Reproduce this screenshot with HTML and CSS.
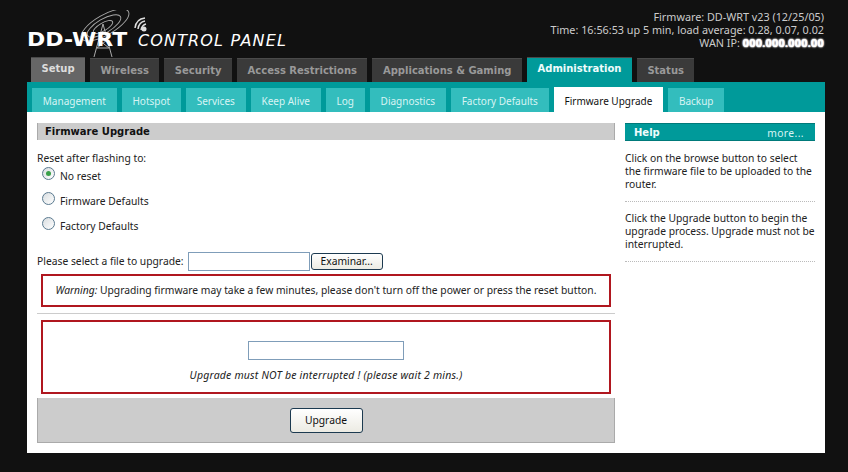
FILE: index.html
```html
<!DOCTYPE html>
<html lang="en">
<head>
  <meta charset="UTF-8" />
  <title>DD-WRT Control Panel</title>
  <link rel="stylesheet" href="styles.css">
</head>
<body>
  <div class="page">
    <!-- Header -->
    <div class="header">
      <div class="logo">
        <svg class="logo-art" width="110" height="50" viewBox="0 0 110 50" fill="none" stroke="#aaa">
          <ellipse cx="53" cy="15" rx="27" ry="10" transform="rotate(-30 53 15)" stroke-width="0.9"/>
          <ellipse cx="52" cy="16" rx="19" ry="7" transform="rotate(-30 52 16)" stroke-width="0.9"/>
          <ellipse cx="51" cy="17" rx="11" ry="4" transform="rotate(-30 51 17)" stroke-width="0.9"/>
          <path d="M51 14 L42 47 M51 14 L60 47 M47 30 H55 M45 38 H57 M47 30 L57 38 M55 30 L45 38" stroke-width="1"/>
          <path d="M83 18 Q84 9 93 8 M86 19 Q87 12 93 11 M89 20 Q90 15 94 14" stroke="#ddd" stroke-width="1.5"/>
          <circle cx="92" cy="19" r="2.5" fill="#ddd" stroke="none"/>
        </svg>
        <span class="logo-name">DD-WRT</span>
        <span class="logo-title">CONTROL PANEL</span>
      </div>
      <div class="info">
        <div>Firmware: DD-WRT v23 (12/25/05)</div>
        <div>Time: 16:56:53 up 5 min, load average: 0.28, 0.07, 0.02</div>
        <div>WAN IP: <span class="blur-ip">000.000.000.00</span></div>
      </div>
    </div>

    <!-- Main tabs -->
    <div class="tabs">
      <a class="tab tab-setup">Setup</a>
      <a class="tab">Wireless</a>
      <a class="tab">Security</a>
      <a class="tab">Access Restrictions</a>
      <a class="tab">Applications &amp; Gaming</a>
      <a class="tab tab-active">Administration</a>
      <a class="tab">Status</a>
    </div>

    <!-- Sub tabs -->
    <div class="subtabs">
      <a class="subtab">Management</a>
      <a class="subtab">Hotspot</a>
      <a class="subtab">Services</a>
      <a class="subtab">Keep Alive</a>
      <a class="subtab">Log</a>
      <a class="subtab">Diagnostics</a>
      <a class="subtab">Factory Defaults</a>
      <a class="subtab subtab-active">Firmware Upgrade</a>
      <a class="subtab">Backup</a>
    </div>

    <!-- Content -->
    <div class="content">
      <div class="main">
        <h2 class="section-title">Firmware Upgrade</h2>
        <div class="reset-label">Reset after flashing to:</div>
        <label class="radio-row"><span class="radio radio-on"></span>No reset</label>
        <label class="radio-row"><span class="radio"></span>Firmware Defaults</label>
        <label class="radio-row"><span class="radio"></span>Factory Defaults</label>
        <div class="file-row">
          <span>Please select a file to upgrade:</span>
          <span class="file-input"></span>
          <button class="btn btn-browse">Examinar...</button>
        </div>
        <div class="warning"><em>Warning:</em> Upgrading firmware may take a few minutes, please don't turn off the power or press the reset button.</div>
        <hr class="rule">
        <div class="progress-box">
          <div class="progress-bar"></div>
          <em class="progress-note">Upgrade must NOT be interrupted ! (please wait 2 mins.)</em>
        </div>
        <div class="submit-bar">
          <button class="btn btn-upgrade">Upgrade</button>
        </div>
      </div>

      <div class="help">
        <div class="help-head"><b>Help</b><span>more...</span></div>
        <p class="help-text">Click on the browse button to select the firmware file to be uploaded to the router.</p>
        <p class="help-text">Click the Upgrade button to begin the upgrade process. Upgrade must not be interrupted.</p>
      </div>
    </div>
  </div>
</body>
</html>
```

FILE: styles.css
```css
html, body {
  margin: 0;
  height: 100%;
  background: #111;
  overflow: hidden;
}

body {
  font-family: "Noto Sans", "Liberation Sans", sans-serif;
  font-size: 10.3px;
  color: #222;
}

.page {
  width: 798px;
  margin-left: 27px;
}

/* Header */
.header {
  display: flex;
  justify-content: space-between;
  height: 57px;
}

.logo {
  position: relative;
  padding-top: 27px;
  display: flex;
  align-items: baseline;
  color: #fff;
  white-space: nowrap;
  height: 30px;
}

.logo-art {
  position: absolute;
  left: 25px;
  top: 10px;
}

.logo-name {
  position: relative;
  font-family: "DejaVu Sans", sans-serif;
  font-weight: bold;
  font-size: 20px;
  width: 111px;
  transform: scaleX(1.1);
  transform-origin: left;
}

.logo-title {
  position: relative;
  font-family: "DejaVu Sans", sans-serif;
  font-style: italic;
  font-size: 16px;
  letter-spacing: 1.15px;
  font-weight: normal;
}

.info {
  padding-top: 10px;
  padding-right: 1px;
  text-align: right;
  color: #ccc;
  line-height: 13px;
  font-size: 10.8px;
}

.blur-ip {
  color: #fff;
  font-weight: bold;
  letter-spacing: 0.3px;
  text-shadow: 0 0 2px #fff, 0 0 2px #fff, 0 0 1px #fff;
}

/* Main tabs */
.tabs {
  display: flex;
  gap: 5px;
  height: 25px;
  padding-left: 4px;
  align-items: flex-end;
}

.tab {
  height: 24px;
  line-height: 24px;
  padding: 0 10.5px;
  background: #3a3a3a;
  border-top: 1px solid #4a4a4a;
  color: #999;
  font-family: "DejaVu Sans", sans-serif;
  font-weight: bold;
  font-size: 10px;
  box-sizing: border-box;
}

.tab-setup {
  background: #666;
  color: #ddd;
  height: 25px;
  line-height: 22px;
}

.tab-active {
  background: #009a9a;
  color: #eefcfc;
  height: 25px;
  line-height: 22px;
}

/* Sub tabs */
.subtabs {
  display: flex;
  gap: 5px;
  height: 24px;
  padding: 6px 0 0 5px;
  background: #009a9a;
}

.subtab {
  padding: 0 10.8px;
  line-height: 26px;
  background: #33bdbd;
  color: #d8f4f4;
  font-size: 10px;
}

.subtab-active {
  background: #fff;
  color: #111;
  margin-top: -1px;
  padding-top: 1px;
}

/* Content */
.content {
  display: flex;
  gap: 10px;
  height: 341px;
  padding: 11px 10px 0;
  background: #fff;
  box-sizing: border-box;
}

.main {
  width: 578px;
}

.section-title {
  margin: 0;
  height: 17px;
  line-height: 17px;
  padding-left: 7px;
  background: #ccc;
  border-left: 1px solid #aaa;
  border-right: 1px solid #aaa;
  font-family: "DejaVu Sans", sans-serif;
  font-size: 10px;
  font-weight: bold;
  color: #111;
}

.reset-label {
  margin-top: 12px;
  line-height: 13px;
}

.radio-row {
  display: flex;
  align-items: center;
  gap: 5px;
  height: 25px;
  padding-left: 5px;
}

.radio-row:first-of-type {
  margin-top: -2px;
}

.radio {
  width: 11px;
  height: 11px;
  margin-top: -4px;
  border: 1px solid #5a7a90;
  border-radius: 50%;
  background: linear-gradient(135deg, #d8dde0, #fff);
  display: block;
  position: relative;
}

.radio-on::after {
  content: "";
  position: absolute;
  left: 3px;
  top: 3px;
  width: 5px;
  height: 5px;
  border-radius: 50%;
  background: #3aa04a;
}

.file-row {
  display: flex;
  align-items: center;
  margin-top: 13px;
  height: 20px;
}

.file-input {
  width: 120px;
  height: 17px;
  margin-left: 4px;
  border: 1px solid #7f9db9;
  background: #fff;
}

.btn {
  font-family: inherit;
  font-size: 10.3px;
  color: #111;
  border: 1px solid #1c3a50;
  border-radius: 3px;
  background: linear-gradient(#fff, #ecebe3);
  padding: 0;
}

.btn-browse {
  width: 72px;
  height: 17px;
  margin-left: 1px;
}

.warning {
  margin: 3px 4px 0;
  height: 33px;
  line-height: 29px;
  border: 2px solid #b0171f;
  box-sizing: border-box;
  text-align: center;
  white-space: nowrap;
}

.rule {
  margin: 6px 0 6px;
  border: 0;
  border-top: 1px solid #ccc;
}

.progress-box {
  margin: 0 4px;
  height: 74px;
  border: 2px solid #b0171f;
  box-sizing: border-box;
  display: flex;
  flex-direction: column;
  align-items: center;
  padding-top: 19px;
}

.progress-bar {
  width: 156px;
  height: 19px;
  border: 1px solid #7f9db9;
  box-sizing: border-box;
}

.progress-note {
  margin-top: 9px;
  line-height: 13px;
  font-size: 10.5px;
  letter-spacing: 0.2px;
}

.submit-bar {
  margin-top: 4px;
  height: 45px;
  background: #ccc;
  border-left: 1px solid #aaa;
  border-right: 1px solid #aaa;
  border-bottom: 1px solid #aaa;
  box-sizing: border-box;
  display: flex;
  justify-content: center;
  align-items: center;
}

.btn-upgrade {
  width: 73px;
  height: 25px;
}

/* Help */
.help {
  width: 190px;
}

.help-head {
  display: flex;
  justify-content: space-between;
  height: 18px;
  line-height: 18px;
  padding: 0 11px 0 9px;
  margin-bottom: 11px;
  background: #009a9a;
  border-top: 1px solid #007a7a;
  border-bottom: 1px solid #007a7a;
  box-sizing: border-box;
  color: #d8f4f4;
}

.help-head span {
  letter-spacing: 0.4px;
}

.help-head b {
  font-family: "DejaVu Sans", sans-serif;
  font-size: 10px;
  color: #eefcfc;
}

.help-text {
  margin: 0 0 10px;
  padding-bottom: 10px;
  border-bottom: 1px dotted #bbb;
  line-height: 13px;
}
```
